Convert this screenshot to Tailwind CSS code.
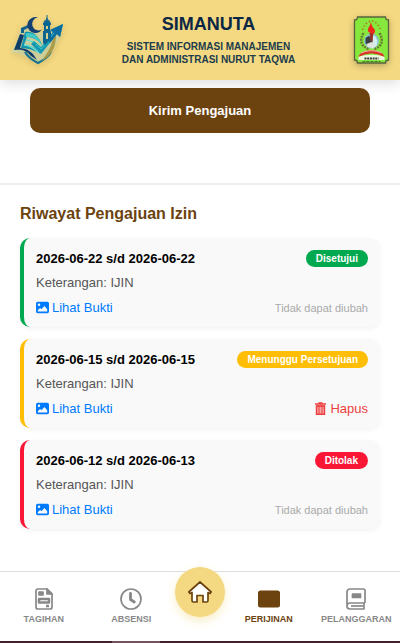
<!DOCTYPE html>
<html lang="id">
 <head>
  <meta charset="utf-8"/>
  <meta content="width=device-width, initial-scale=1.0" name="viewport"/>
  <title>SIMANUTA - Perijinan</title>
  <script src="https://cdn.jsdelivr.net/npm/@tailwindcss/browser@4"></script>
 </head>
 <body class="flex min-h-screen flex-col bg-white font-['Liberation_Sans',Arial,sans-serif] text-[13px] leading-4">
  <svg class="hidden" aria-hidden="true">
   <symbol id="icon-image" viewBox="0 0 16 16">
    <path fill="currentColor" fill-rule="evenodd" d="M2 1h12a2 2 0 0 1 2 2v10a2 2 0 0 1-2 2H2a2 2 0 0 1-2-2V3a2 2 0 0 1 2-2zM2.200 12.800h11.600V10L10.300 6 6.800 10.200 5 8.500l-2.800 3zM3.700 3.200a1.500 1.500 0 1 0 0 3 1.500 1.500 0 0 0 0-3z"/>
   </symbol>
  </svg>

  <!-- Header -->
  <header class="flex h-20 items-center justify-between bg-[#f4d982] px-2.5 shadow-[0_4px_12px_rgba(0,0,0,0.12)]">
   <svg class="h-[54px] w-[54px] drop-shadow-[0_2px_3px_rgba(0,0,0,0.15)]" viewBox="0 0 54 54" role="img" aria-label="Logo Simanuta">
    <path d="M11 13 7 29 1 39l9 2 7 3 11 7 12-9 8-15 5-15-13 6-11 2z" fill="#c3d7b4" opacity=".6"/>
    <!-- perisai -->
    <path d="M15 39c3 5 7 8 13 11 6-3 10-6 13-11" fill="none" stroke="#14728f" stroke-width="2.200"/>
    <path d="M46 22c0 12-4 20-14 26 4-7 9-12 11-23z" fill="#a99b48"/>
    <path d="M11 20v-5l7-3v3l-4 2v3z" fill="#12608a"/>
    <!-- buku -->
    <path d="m10 21-6 16c8-1 12 0 17 6l6 4-4-6c-4-4-8-6-13-6l4-13z" fill="#103c68"/>
    <path d="M15 19c7-1 12 2 17 12-6-5-10-7-15-7l-3 8c6 0 11 2 17 9-7-4-13-6-20-6z" fill="#1292ac"/>
    <path d="M16 20c9-1 14 5 17 15-4-8-9-11-17-11z" fill="#42c9c6"/>
    <path d="M16 27c6 0 10 3 14 7M14 32c6 0 10 3 15 8" stroke="#6be0d2" stroke-width="1.300" fill="none"/>
    <!-- panah -->
    <path d="m24 28 7 6 12-15-3-2 13-6-3 13-3-3-16 20-10-10z" fill="#159ab3"/>
    <path d="m40 17 13-6-3 13-3-3-7 9-2-4 5-7z" fill="#0a6c9f"/>
    <path d="m26 31 5 5 13-16" stroke="#3bc2c9" fill="none"/>
    <!-- bulan sabit -->
    <path d="M28 4.500a8 8 0 1 0 4 12 6.500 6.500 0 1 1-4-12z" fill="#123f74"/>
    <!-- menara -->
    <path d="M37 2v4M34 10c0-3 3-3 3-5 0 2 3 2 3 5z" stroke="#116791" fill="#116791"/>
    <path d="M33 10h8v2h-1v6h1v7l-6 7-2-2V18h1v-6h-1z" fill="#0c6490"/>
    <path d="M36 13h2v3h-2zM36 20h2v6h-2z" fill="#d8d18d"/>
   </svg>
   <div class="pb-0.5 text-center text-[#0b2745]">
    <h1 class="text-lg leading-6 font-bold">SIMANUTA</h1>
    <p class="mt-1 text-[10px] leading-[13px] font-bold text-[#203c4d]">SISTEM INFORMASI MANAJEMEN<br/>DAN ADMINISTRASI NURUT TAQWA</p>
   </div>
   <svg class="h-12 w-[37px] drop-shadow-[0_2px_3px_rgba(0,0,0,0.25)]" viewBox="0 0 36 48" role="img" aria-label="Logo Nurut Taqwa">
    <path d="M4 1h28c0 2 1 3 3 3v40c-2 0-3 1-3 3H4c0-2-1-3-3-3V4c2 0 3-1 3-3z" fill="#86e83d" stroke="#58633e" stroke-width="1.300"/>
    <path d="M9 14c2-6 6-9 9-9s7 3 9 9" stroke="#ad7d22" stroke-width="1.500" stroke-dasharray="1.500 2" fill="none"/>
    <path d="M10 17c-4 7-3 13 5 16M26 17c4 7 3 13-5 16" stroke="#6c7a30" stroke-width="2.500" stroke-dasharray="2 1" fill="none"/>
    <circle cx="18" cy="25" r="7.500" fill="#8dc3cf"/>
    <path d="M18 18c5 3 7 6 5 12l-5 3z" fill="#d2eef1"/>
    <path d="m12 22 3-2 4 2v6l-4 3-3-4z" fill="#373f43"/>
    <path d="m13 28 5-2 4 2-3 4-5-1z" fill="#e2e3dc"/>
    <path d="m16 17 4-1-1 9h-2z" fill="#9b3427"/>
    <path d="M15 16c-2-5 3-6 2-10 2 3 1 4 3 6 2 2 2 4 0 6z" fill="#ed251b"/>
    <path d="M5 41c2-9 24-9 26 0l-5-2c-5-2-11-2-16 0z" fill="#dc2e2b"/>
    <path d="M8 37c6-3 14-3 20 0" fill="none" stroke="#f3b9a1"/>
    <path d="M5 41c7-3 19-3 26 0v3H5z" fill="#eef5df"/>
    <path d="M11 42.500h14" stroke="#353d35" stroke-width="2" stroke-dasharray="2 .700"/>
    <path d="M9 45.500h18" stroke="#497e2a" stroke-dasharray="3 1"/>
   </svg>
  </header>

  <!-- Main Content -->
  <main class="flex-1">
   <div class="px-[30px] pt-2 pb-[50px]">
    <button type="submit" class="h-[45px] w-full rounded-[10px] bg-[#6c430f] font-bold text-white">Kirim Pengajuan</button>
   </div>

   <section class="border-t-2 border-[#eeeeee] px-5 pt-[19px] pb-8">
    <h2 class="mb-3.5 text-base leading-5 font-bold text-[#6c430f]">Riwayat Pengajuan Izin</h2>
    <ul class="space-y-3">
     <!-- Disetujui -->
     <li class="space-y-2 rounded-[10px] border-l-4 border-[#00a94f] bg-[#f9f9f9] px-3 pt-3 pb-[11px] shadow-[0_2px_5px_rgba(0,0,0,0.05)]">
      <div class="flex items-center justify-between">
       <h3 class="font-bold text-black">2026-06-22 s/d 2026-06-22</h3>
       <span class="rounded-full bg-[#00a94f] px-2.5 text-[10px] leading-[17px] font-bold text-white">Disetujui</span>
      </div>
      <p class="text-[#555555]">Keterangan: IJIN</p>
      <div class="flex items-center justify-between">
       <a href="#" class="flex items-center gap-[3px] leading-[17px] text-[#007bff]"><svg class="size-[13px]"><use href="#icon-image"/></svg>Lihat Bukti</a>
       <span class="text-[11px] text-[#aaaaaa]">Tidak dapat diubah</span>
      </div>
     </li>
     <!-- Menunggu -->
     <li class="space-y-2 rounded-[10px] border-l-4 border-[#ffbd03] bg-[#f9f9f9] px-3 pt-3 pb-[11px] shadow-[0_2px_5px_rgba(0,0,0,0.05)]">
      <div class="flex items-center justify-between">
       <h3 class="font-bold text-black">2026-06-15 s/d 2026-06-15</h3>
       <span class="rounded-full bg-[#ffbd03] px-2.5 text-[10px] leading-[17px] font-bold text-white">Menunggu Persetujuan</span>
      </div>
      <p class="text-[#555555]">Keterangan: IJIN</p>
      <div class="flex items-center justify-between">
       <a href="#" class="flex items-center gap-[3px] leading-[17px] text-[#007bff]"><svg class="size-[13px]"><use href="#icon-image"/></svg>Lihat Bukti</a>
       <button type="button" class="flex items-center gap-1 leading-[17px] text-[#ed3e3e]">
        <svg class="h-[13px] w-[11px]" viewBox="0 0 11 13" fill="none" stroke="currentColor"><path d="M0 2h11M3.500 1h4" stroke-width="1.600"/><path d="M1.500 4v8.200h8V4z" fill="#f7a7a7" stroke-width="1.400"/><path d="M1 4h9M4 4v8M7 4v8"/></svg>Hapus
       </button>
      </div>
     </li>
     <!-- Ditolak -->
     <li class="space-y-2 rounded-[10px] border-l-4 border-[#fa1735] bg-[#f9f9f9] px-3 pt-3 pb-[11px] shadow-[0_2px_5px_rgba(0,0,0,0.05)]">
      <div class="flex items-center justify-between">
       <h3 class="font-bold text-black">2026-06-12 s/d 2026-06-13</h3>
       <span class="rounded-full bg-[#fa1735] px-2.5 text-[10px] leading-[17px] font-bold text-white">Ditolak</span>
      </div>
      <p class="text-[#555555]">Keterangan: IJIN</p>
      <div class="flex items-center justify-between">
       <a href="#" class="flex items-center gap-[3px] leading-[17px] text-[#007bff]"><svg class="size-[13px]"><use href="#icon-image"/></svg>Lihat Bukti</a>
       <span class="text-[11px] text-[#aaaaaa]">Tidak dapat diubah</span>
      </div>
     </li>
    </ul>
   </section>
  </main>

  <!-- Bottom Nav -->
  <nav class="flex h-[70px] items-center border-t border-[#dddddd] bg-white text-[9px] leading-3 font-bold text-[#888888]">
   <a href="#" class="flex min-w-0 flex-1 flex-col items-center gap-0.5 pb-0.5">
    <svg class="size-6" viewBox="0 0 24 24" fill="none" stroke="currentColor" stroke-width="1.700" stroke-linejoin="round"><path d="M6 2h9l5 5v13a2 2 0 0 1-2 2H6a2 2 0 0 1-2-2V4a2 2 0 0 1 2-2z"/><path d="M15 2v5h5z" fill="currentColor"/><path d="M7 5h4v3H7z" fill="currentColor"/><path d="M7 12h10v3.500H7zM14 19h3" stroke-width="2.500"/></svg>
    TAGIHAN
   </a>
   <a href="#" class="flex min-w-0 flex-1 flex-col items-center gap-0.5 pb-0.5">
    <svg class="size-6" viewBox="0 0 24 24" fill="none" stroke="currentColor" stroke-linecap="round" stroke-linejoin="round"><circle cx="12" cy="12" r="10" stroke-width="1.700"/><path d="M11.500 6.500v6l3.800 2.500" stroke-width="2.800"/></svg>
    ABSENSI
   </a>
   <a href="#" aria-label="Beranda" class="mb-[30px] flex size-[50px] shrink-0 items-center justify-center rounded-full bg-[#f4d982] shadow-[0_4px_10px_rgba(244,217,130,0.45)]">
    <svg class="size-6" viewBox="0 0 24 24" fill="white" stroke="#6c430f" stroke-width="1.700" stroke-linejoin="round"><path d="M12 2 .800 12l1.200 1.500 2-1V20.500a1.500 1.500 0 0 0 1.500 1.500H9v-6.500h6V22h3.500a1.500 1.500 0 0 0 1.500-1.500v-8l2 1 1.200-1.500z"/></svg>
   </a>
   <a href="#" aria-current="page" class="flex min-w-0 flex-1 flex-col items-center gap-0.5 pb-0.5 text-[#6c430f]">
    <svg class="size-6" viewBox="0 0 24 24" fill="currentColor"><rect x="1" y="3.500" width="22" height="17" rx="2.500"/></svg>
    PERIJINAN
   </a>
   <a href="#" class="flex min-w-0 flex-1 flex-col items-center gap-0.5 pb-0.5">
    <svg class="size-6" viewBox="0 0 24 24" fill="none" stroke="currentColor" stroke-width="1.700" stroke-linejoin="round"><path d="M21 16V3.500A1.500 1.500 0 0 0 19.500 2H6a3 3 0 0 0-3 3v14a3 3 0 0 0 3 3h14.500M21 16H6a3 3 0 0 0 0 6M20 16v6"/><path d="M8.500 7h8v3.500h-8z" fill="currentColor"/><path d="M7 19h12"/></svg>
    PELANGGARAN
   </a>
  </nav>
  <div class="flex h-0.5 bg-[#42202b]"><div class="ml-[28%] w-[12%] bg-[#71545d]"></div></div>
 </body>
</html>
